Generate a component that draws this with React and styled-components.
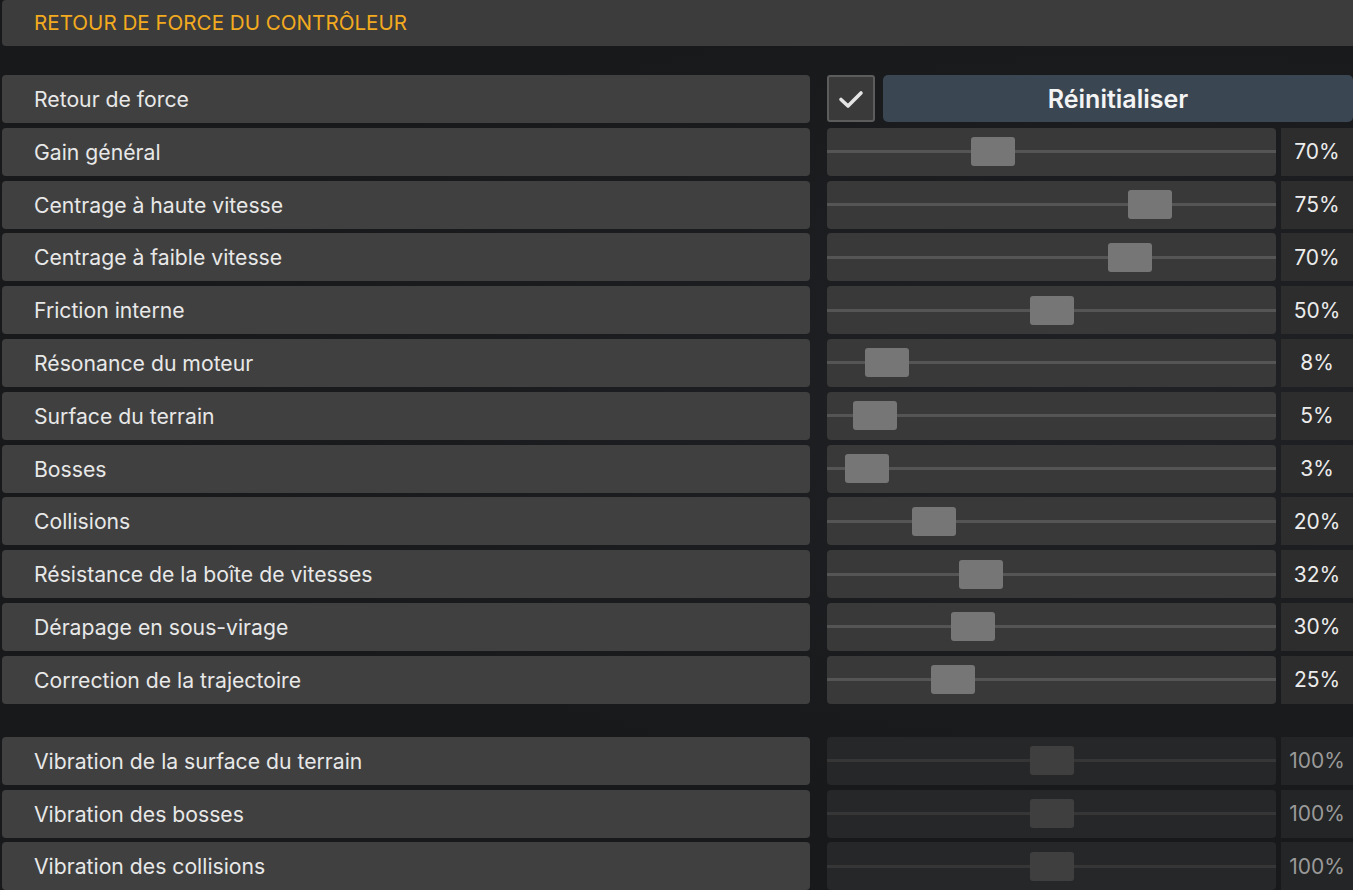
import React from "react";
import styled, { createGlobalStyle } from "styled-components";

const Global = createGlobalStyle`
  html, body { margin: 0; padding: 0; background: #18191b; }
  body { font-family: Inter, "Noto Sans", sans-serif; color: #e6e6e6; }
  * { box-sizing: border-box; }
`;

const Page = styled.div`
  width: 1353px;
  height: 890px;
  overflow: hidden;
  padding-left: 2px;
  display: flex;
  flex-direction: column;
  background: radial-gradient(ellipse at 85% 45%, #202124 0%, #18191b 60%);
`;

const Header = styled.div`
  height: 46px;
  flex-shrink: 0;
  background: #3c3c3c;
  border-radius: 4px 0 0 4px;
  display: flex;
  align-items: center;
  padding-left: 32px;
  padding-bottom: 1px;
  color: #f2aa1f;
  font-size: 20.6px;
  font-weight: 400;
`;

const Group = styled.div`
  display: flex;
  flex-direction: column;
  gap: 4.8px;
  margin-top: ${(p) => p.$top}px;
`;

const ValueRow = styled.div`
  height: 48px;
  flex-shrink: 0;
  display: flex;
`;

const Label = styled.div`
  flex: 0 0 808px;
  background: #404040;
  border-radius: 4px;
  display: flex;
  align-items: center;
  padding-left: 32px;
  font-size: 21.2px;
  color: #e8e8e8;
`;

const Controls = styled.div`
  flex: 1;
  display: flex;
  margin-left: 17px;
  gap: 8px;
`;

const Check = styled.div`
  flex: 0 0 48px;
  height: 47px;
  border: 2px solid #5c5c5c;
  border-radius: 3px;
  background: #3a3a3a;
  display: flex;
  align-items: center;
  justify-content: center;
`;

const ResetButton = styled.div`
  flex: 1;
  height: 47px;
  background: #3a4651;
  border-radius: 5px;
  display: flex;
  align-items: center;
  justify-content: center;
  font-size: 25px;
  font-weight: 600;
  color: #f4f4f4;
`;

const Track = styled.div`
  position: relative;
  flex: 0 0 449px;
  margin-left: 17px;
  background: ${(p) => (p.$disabled ? "#262728" : "#393939")};
  border-radius: 4px;
  &::before {
    content: "";
    position: absolute;
    left: 0;
    right: 0;
    top: 50%;
    height: 3px;
    margin-top: -1.5px;
    background: ${(p) => (p.$disabled ? "#363636" : "#555555")};
  }
`;

const Thumb = styled.div`
  position: absolute;
  top: 50%;
  width: 44px;
  height: 29px;
  margin-top: -14.5px;
  border-radius: 3px;
  background: ${(p) => (p.$disabled ? "#3f3f3f" : "#767676")};
`;

const Value = styled.div`
  flex: 0 0 72px;
  margin-left: 5px;
  background: ${(p) => (p.$disabled ? "#242526" : "#2d2d2d")};
  display: flex;
  align-items: center;
  justify-content: center;
  font-size: 21px;
  color: ${(p) => (p.$disabled ? "#9a9a9a" : "#ececec")};
`;

const sliders = [
  ["Gain général", "70%", 144],
  ["Centrage à haute vitesse", "75%", 301],
  ["Centrage à faible vitesse", "70%", 281],
  ["Friction interne", "50%", 203],
  ["Résonance du moteur", "8%", 38],
  ["Surface du terrain", "5%", 26],
  ["Bosses", "3%", 18],
  ["Collisions", "20%", 85],
  ["Résistance de la boîte de vitesses", "32%", 132],
  ["Dérapage en sous-virage", "30%", 124],
  ["Correction de la trajectoire", "25%", 104],
];

const vibrations = [
  ["Vibration de la surface du terrain", "100%", 203],
  ["Vibration des bosses", "100%", 203],
  ["Vibration des collisions", "100%", 203],
];

function SliderRow({ label, value, pos, disabled }) {
  return (
    <ValueRow>
      <Label>{label}</Label>
      <Track $disabled={disabled}>
        <Thumb $disabled={disabled} style={{ left: pos }} />
      </Track>
      <Value $disabled={disabled}>{value}</Value>
    </ValueRow>
  );
}

export default function App() {
  return (
    <>
      <Global />
      <Page>
        <Header>RETOUR DE FORCE DU CONTRÔLEUR</Header>
        <Group $top={29}>
          <ValueRow>
            <Label>Retour de force</Label>
            <Controls>
              <Check>
                <svg width="28" height="22" viewBox="0 0 28 22">
                  <path
                    d="M4 11.5 L11 18 L24 5"
                    fill="none"
                    stroke="#e4e4e4"
                    strokeWidth="3.6"
                    strokeLinecap="round"
                    strokeLinejoin="round"
                  />
                </svg>
              </Check>
              <ResetButton>Réinitialiser</ResetButton>
            </Controls>
          </ValueRow>
          {sliders.map(([l, v, p]) => (
            <SliderRow key={l} label={l} value={v} pos={p} />
          ))}
        </Group>
        <Group $top={33}>
          {vibrations.map(([l, v, p]) => (
            <SliderRow key={l} label={l} value={v} pos={p} disabled />
          ))}
        </Group>
      </Page>
    </>
  );
}
